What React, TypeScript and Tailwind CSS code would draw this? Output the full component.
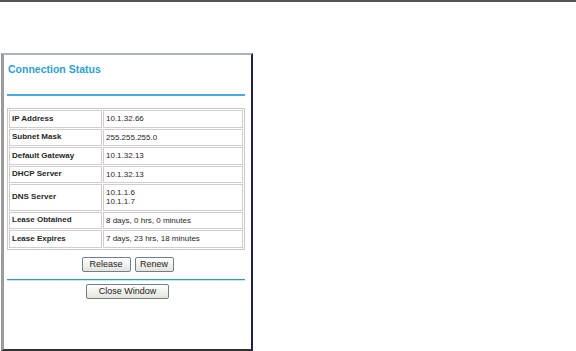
import React from "react";

const rows: [string, string[]][] = [
  ["IP Address", ["10.1.32.66"]],
  ["Subnet Mask", ["255.255.255.0"]],
  ["Default Gateway", ["10.1.32.13"]],
  ["DHCP Server", ["10.1.32.13"]],
  ["DNS Server", ["10.1.1.6", "10.1.1.7"]],
  ["Lease Obtained", ["8 days, 0 hrs, 0 minutes"]],
  ["Lease Expires", ["7 days, 23 hrs, 18 minutes"]],
];

function Btn({ label, w }: { label: string; w: string }) {
  return (
    <button
      className={`h-[15px] ${w} rounded-[2px] border border-[#6f7f8f] bg-gradient-to-b from-[#ffffff] to-[#e4e4dc] text-[9px] leading-[13px] text-[#222] flex items-center justify-center`}
    >
      {label}
    </button>
  );
}

export default function App() {
  return (
    <div
      className="w-[576px] h-[351px] bg-white overflow-hidden relative"
      style={{ fontFamily: '"Liberation Sans", Arial, sans-serif' }}
    >
      <div className="h-[2px] bg-[#555]" />
      <div className="mt-[51px] ml-[1px] w-[252px] h-[298px] flex flex-col border-t-2 border-t-[#a6b4bc] border-l-[3px] border-l-[#9c9c9c] border-r-2 border-r-[#1e2050] border-b-2 border-b-[#303030] bg-white">
        <div className="pl-[4px] pt-[7px] text-[10.5px] leading-[14px] font-bold text-[#2e9fd2]">
          Connection Status
        </div>
        <div className="ml-[3px] mt-[18px] w-[238px] h-[2px] bg-[#45aede]" />
        <table
          className="ml-[3px] mt-[12px] w-[238px] border border-[#c8c8c8] text-[8px] text-[#262626]"
          style={{ borderCollapse: "separate", borderSpacing: "1px" }}
        >
          <tbody>
            {rows.map(([k, v]) => (
              <tr key={k}>
                <td className="w-[93px] border border-[#d2cccc] pl-[2px] py-[2.75px] leading-[10px] font-bold align-middle">
                  {k}
                </td>
                <td className="border border-[#d2cccc] pl-[2px] py-[2.75px] leading-[9.5px] align-middle">
                  {v.map((x) => (
                    <div key={x}>{x}</div>
                  ))}
                </td>
              </tr>
            ))}
          </tbody>
        </table>
        <div className="mt-[7px] flex justify-center gap-[4px]">
          <Btn label="Release" w="w-[49px]" />
          <Btn label="Renew" w="w-[39px]" />
        </div>
        <div className="ml-[3px] mt-[7px] w-[238px] h-[1px] bg-[#2ea0b4]" />
        <div className="h-[1px] ml-[3px] w-[238px] bg-[#c8e8ee]" />
        <div className="mt-[3px] flex justify-center">
          <Btn label="Close Window" w="w-[83px]" />
        </div>
      </div>
    </div>
  );
}
